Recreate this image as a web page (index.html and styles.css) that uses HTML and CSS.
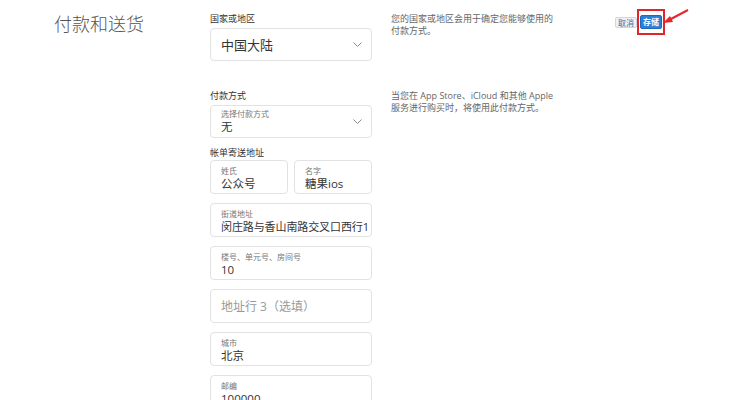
FILE: index.html
```html
<!DOCTYPE html>
<html lang="zh-CN">
<head>
  <meta charset="UTF-8" />
  <meta name="viewport" content="width=device-width, initial-scale=1.0"/>
  <title>付款和送货</title>
  <link rel="stylesheet" href="styles.css">
</head>
<body>

  <div class="page">
    <h1 class="title">付款和送货</h1>

    <!-- 国家或地区 -->
    <div class="section">
      <div class="label">国家或地区</div>
      <div class="field select">
        <span class="value big">中国大陆</span>
        <svg class="chevron" width="9" height="5" viewBox="0 0 9 5"><path d="M0.5 0.5 L4.5 4.5 L8.5 0.5" fill="none" stroke="#8a8a8a" stroke-width="1"/></svg>
      </div>
    </div>
    <p class="help">您的国家或地区会用于确定您能够使用的付款方式。</p>

    <div class="actions">
      <button class="btn btn-cancel">取消</button>
      <span class="mark">
        <button class="btn btn-save">存储</button>
      </span>
      <svg class="arrow" width="30" height="20" viewBox="0 0 30 20">
        <path d="M27 2 L8 12" stroke="#e5262a" stroke-width="2" fill="none"/>
        <path d="M2 15 L9 8 L12 14 Z" fill="#e5262a"/>
      </svg>
    </div>

    <!-- 付款方式 + 帐单寄送地址 -->
    <div class="section payment">
      <div class="label">付款方式</div>
      <div class="field select float">
        <div class="grow">
          <div class="small">选择付款方式</div>
          <div class="value">无</div>
        </div>
        <svg class="chevron" width="9" height="5" viewBox="0 0 9 5"><path d="M0.5 0.5 L4.5 4.5 L8.5 0.5" fill="none" stroke="#8a8a8a" stroke-width="1"/></svg>
      </div>

      <div class="label billing">帐单寄送地址</div>
      <div class="fields">
        <div class="name-row">
          <div class="field float">
            <div class="small">姓氏</div>
            <div class="value">公众号</div>
          </div>
          <div class="field float">
            <div class="small">名字</div>
            <div class="value">糖果ios</div>
          </div>
        </div>
        <div class="field float">
          <div class="small">街道地址</div>
          <div class="value long">闵庄路与香山南路交叉口西行1</div>
        </div>
        <div class="field float">
          <div class="small">楼号、单元号、房间号</div>
          <div class="value">10</div>
        </div>
        <div class="field">
          <span class="placeholder">地址行 3（选填）</span>
        </div>
        <div class="field float">
          <div class="small">城市</div>
          <div class="value">北京</div>
        </div>
        <div class="field float">
          <div class="small">邮编</div>
          <div class="value">100000</div>
        </div>
      </div>
    </div>
    <p class="help payment-help">当您在 App Store、iCloud 和其他 Apple<br>服务进行购买时，将使用此付款方式。</p>
  </div>

</body>
</html>
```

FILE: styles.css
```css
body {
  margin: 0;
  padding: 0;
  background: #fff;
  font-family: "Open Sans", "Noto Sans CJK SC", sans-serif;
  color: #333;
}
.page {
  display: grid;
  grid-template-columns: 156px 162px 243px auto;
  align-items: start;
  padding: 13px 0 0 54px;
}
.title {
  grid-column: 1;
  grid-row: 1;
  margin: 0;
  font-size: 18px;
  line-height: 22px;
  font-weight: 300;
  color: #555;
}
.section {
  grid-column: 2;
}
.label {
  font-size: 9px;
  line-height: 12px;
  color: #333;
  margin-bottom: 3px;
}
.payment {
  margin-top: 29px;
}
.payment .label {
  margin-bottom: 3px;
}
.payment .label.billing {
  margin: 9px 0 1px;
}
.field {
  box-sizing: border-box;
  height: 34px;
  border: 1px solid #e2e2e2;
  border-radius: 4px;
  background: #fff;
  padding: 0 6px 0 10px;
  display: flex;
  flex-direction: column;
  justify-content: center;
}
.select {
  height: 33px;
  flex-direction: row;
  align-items: center;
  justify-content: space-between;
  padding-right: 9px;
}
.float {
  justify-content: flex-start;
  padding-top: 4px;
}
.select.float {
  align-items: center;
  padding-top: 0;
}
.grow {
  flex: 1;
}
.small {
  font-size: 8px;
  line-height: 11px;
  color: #777;
}
.value {
  font-size: 11.5px;
  line-height: 16px;
  color: #333;
  white-space: nowrap;
}
.value.long {
  font-size: 11px;
  letter-spacing: -0.1px;
}
.value.big {
  font-size: 13px;
  line-height: 18px;
}
.placeholder {
  font-size: 12px;
  color: #999;
}
.chevron {
  flex: none;
}
.fields {
  display: flex;
  flex-direction: column;
  gap: 9px;
}
.name-row {
  display: grid;
  grid-template-columns: 1fr 1fr;
  gap: 6px;
}
.help {
  grid-column: 3;
  margin: 0;
  padding-left: 19px;
  width: 170px;
  font-size: 9px;
  line-height: 12px;
  color: #666;
}
.help:first-of-type {
  grid-row: 1;
}
.payment-help {
  grid-row: 2;
  margin-top: 29px;
  width: 190px;
}
.actions {
  grid-column: 4;
  grid-row: 1;
  position: relative;
  display: flex;
  align-items: center;
  gap: 0;
  margin-top: -4px;
}
.btn {
  font-family: "Noto Sans CJK SC", sans-serif;
  font-size: 8px;
  line-height: 10px;
  border-radius: 2px;
  padding: 0 2px;
  cursor: pointer;
}
.btn-cancel {
  height: 11px;
  background: #eef1f6;
  border: 1px solid #cfd6e0;
  color: #3a6ea5;
}
.mark {
  display: inline-flex;
  padding: 4px 1px;
  border: 2px solid #e0262b;
}
.btn-save {
  height: 14px;
  background: #2b7fd4;
  border: 1px solid #1f6ab8;
  color: #fff;
  font-weight: bold;
}
.arrow {
  position: absolute;
  left: 46px;
  top: -1px;
}
```
